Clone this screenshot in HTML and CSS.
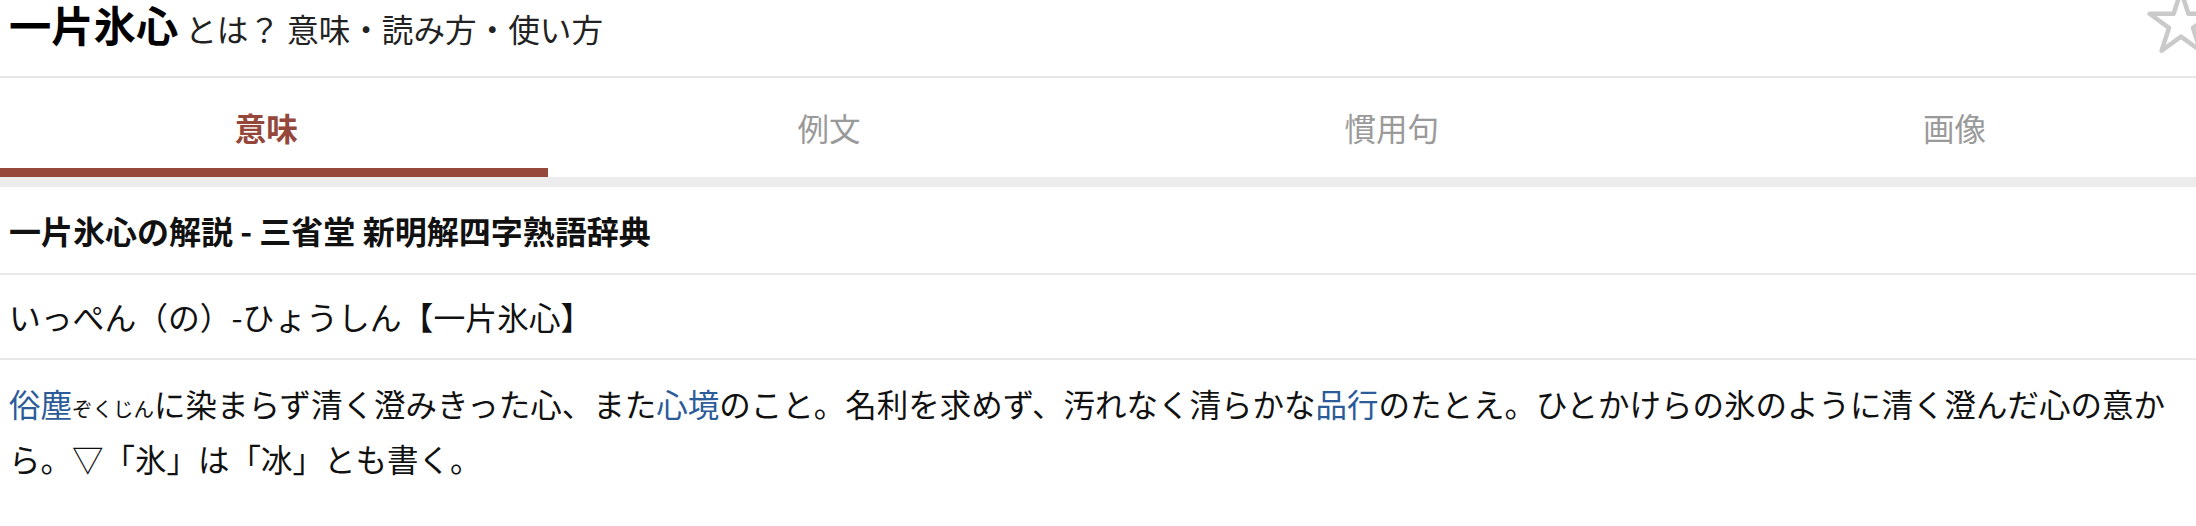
FILE: index.html
```html
<!DOCTYPE html>
<html lang="ja">
<head>
<meta charset="UTF-8">
<meta name="viewport" content="width=device-width, initial-scale=1.0">
<title>一片氷心とは？ 意味・読み方・使い方</title>
<link rel="stylesheet" href="styles.css">
</head>
<body>

<div class="header">
    <h1 class="title"><span class="word">一片氷心</span><span class="sub">とは？ 意味・読み方・使い方</span></h1>
    <svg class="star" width="60" height="60" viewBox="0 0 60 60">
        <polygon points="45,-9 52.4,13.8 76.4,13.8 57,27.9 64.4,50.7 45,36.6 25.6,50.7 33,27.9 13.6,13.8 37.6,13.8" fill="none" stroke="#cacaca" stroke-width="4.5" stroke-linejoin="round"/>
    </svg>
</div>

<div class="tabs">
    <div class="tab-strip">
        <div class="tab active">意味</div>
        <div class="tab">例文</div>
        <div class="tab">慣用句</div>
        <div class="tab">画像</div>
    </div>
</div>

<div class="content">
    <h2 class="dict-title">一片氷心の解説 - 三省堂 新明解四字熟語辞典</h2>
    <div class="reading">いっぺん（の）-ひょうしん【一片氷心】</div>
    <p class="meaning"><a href="#">俗塵</a><span class="ruby">ぞくじん</span>に染まらず清く澄みきった心、また<a href="#">心境</a>のこと。名利を求めず、汚れなく清らかな<a href="#">品行</a>のたとえ。ひとかけらの氷のように清く澄んだ心の意から。▽「氷」は「冰」とも書く。</p>
</div>

</body>
</html>
```

FILE: styles.css
```css
html {
    overflow: hidden;
}
body {
    font-family: "Noto Sans CJK JP", "Noto Sans", sans-serif;
    background-color: #fff;
    color: #111;
    margin: 0;
    padding: 0;
}
.header {
    position: relative;
    height: 76px;
    border-bottom: 2px solid #e6e6e6;
    padding: 0 9px;
}
.title {
    margin: 0;
    font-weight: normal;
    line-height: 48px;
    display: flex;
    align-items: baseline;
}
.title .word {
    font-size: 42.3px;
    font-weight: bold;
    color: #000;
    margin-right: 7px;
}
.title .sub {
    font-size: 31.6px;
    color: #222;
}
.star {
    position: absolute;
    top: 0;
    right: 0;
}
/* タブは少し左にスクロールした状態 */
.tabs {
    overflow: hidden;
    border-bottom: 10px solid #ececec;
}
.tab-strip {
    display: flex;
    width: 2251px;
    margin-left: -15px;
}
.tab {
    flex: 1;
    text-align: center;
    font-size: 31.5px;
    color: #9a9a9a;
    line-height: 44px;
    padding: 27px 0 19px;
    border-bottom: 9px solid transparent;
}
.tab.active {
    color: #94473a;
    font-weight: bold;
    border-bottom-color: #96483a;
}
.dict-title {
    margin: 0;
    font-size: 32px;
    font-weight: bold;
    line-height: 44px;
    padding: 21px 9px;
    border-bottom: 2px solid #e8e8e8;
}
.reading {
    font-size: 31.8px;
    line-height: 44px;
    padding: 19px 9px 20px;
    border-bottom: 2px solid #e8e8e8;
}
.meaning {
    margin: 0;
    font-size: 31.5px;
    line-height: 50.4px;
    padding: 18px 9px;
}
.meaning a {
    color: #2b5b99;
    text-decoration: none;
}
.ruby {
    font-size: 20.5px;
}
```
